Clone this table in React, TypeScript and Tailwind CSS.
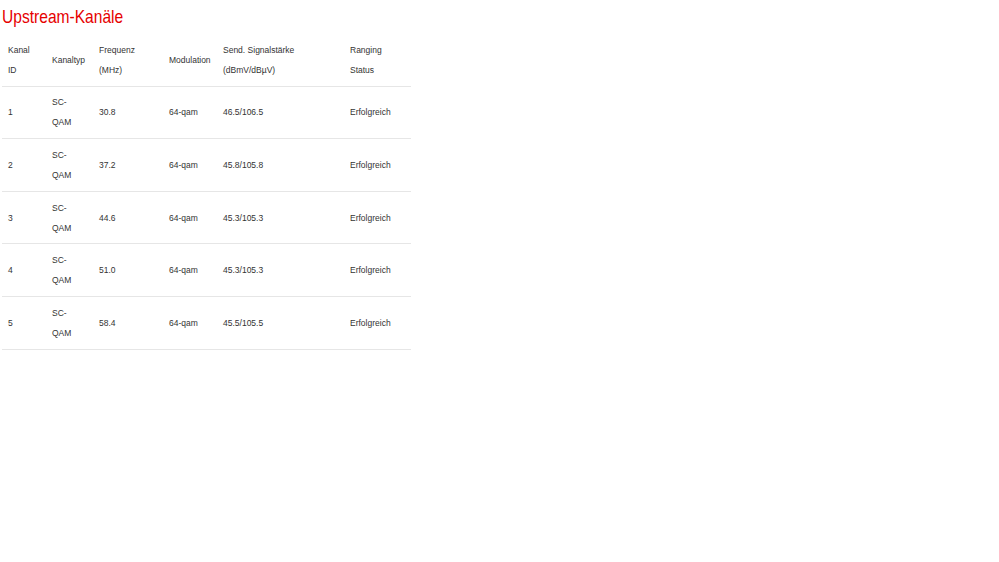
import React from "react";

const rows = [
  { id: "1", freq: "30.8", power: "46.5/106.5" },
  { id: "2", freq: "37.2", power: "45.8/105.8" },
  { id: "3", freq: "44.6", power: "45.3/105.3" },
  { id: "4", freq: "51.0", power: "45.3/105.3" },
  { id: "5", freq: "58.4", power: "45.5/105.5" },
];

const cell = "pl-[6px] py-[5.8px] align-middle leading-[20px]";

export default function App() {
  return (
    <div
      className="min-h-screen bg-white pl-[2px] text-[#333]"
      style={{ fontFamily: '"Liberation Sans", Arial, sans-serif' }}
    >
      {/* heading font in the original is a condensed face */}
      <h1 className="pt-[5px] text-[19px] leading-[23px] text-[#e60000]">
        <span className="inline-block origin-left scale-x-[0.82]">Upstream-Kanäle</span>
      </h1>
      <table className="mt-[6px] w-[409px] table-fixed border-collapse text-[8.5px]">
        <colgroup>
          <col className="w-[44px]" />
          <col className="w-[47px]" />
          <col className="w-[70px]" />
          <col className="w-[54px]" />
          <col className="w-[127px]" />
          <col className="w-[67px]" />
        </colgroup>
        <thead>
          <tr className="border-b border-[#e6e6e6] text-left">
            <th className={`${cell} font-normal`}>
              Kanal
              <br />
              ID
            </th>
            <th className={`${cell} font-normal`}>Kanaltyp</th>
            <th className={`${cell} font-normal`}>
              Frequenz
              <br />
              (MHz)
            </th>
            <th className={`${cell} font-normal`}>Modulation</th>
            <th className={`${cell} font-normal`}>
              Send. Signalstärke
              <br />
              (dBmV/dBµV)
            </th>
            <th className={`${cell} font-normal`}>
              Ranging
              <br />
              Status
            </th>
          </tr>
        </thead>
        <tbody>
          {rows.map(r => (
            <tr key={r.id} className="border-b border-[#e6e6e6]">
              <td className={cell}>{r.id}</td>
              <td className={cell}>
                SC-
                <br />
                QAM
              </td>
              <td className={cell}>{r.freq}</td>
              <td className={cell}>64-qam</td>
              <td className={cell}>{r.power}</td>
              <td className={cell}>Erfolgreich</td>
            </tr>
          ))}
        </tbody>
      </table>
    </div>
  );
}
